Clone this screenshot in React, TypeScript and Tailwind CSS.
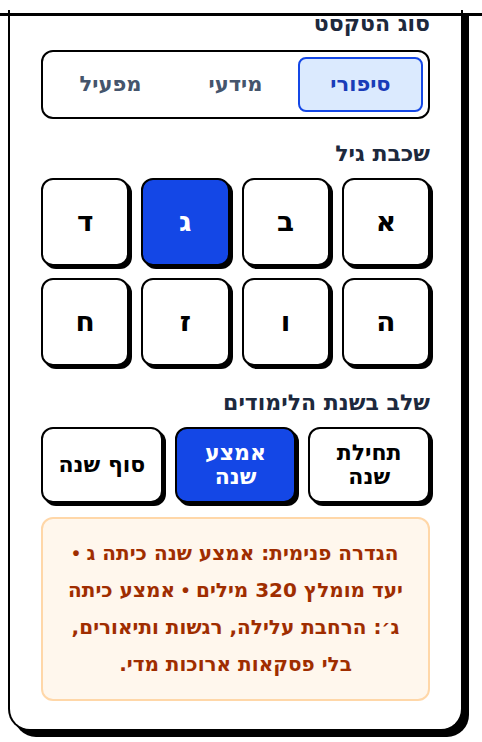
import { useState } from "react";

const textTypes = ["סיפורי", "מידעי", "מפעיל"];
const grades = ["א", "ב", "ג", "ד", "ה", "ו", "ז", "ח"];
const stages = [
  ["תחילת", "שנה"],
  ["אמצע", "שנה"],
  ["סוף שנה"],
];

function SectionTitle({ children }: { children: string }) {
  return <h2 className="text-[22px] font-bold leading-[28px] text-slate-800">{children}</h2>;
}

// small bullet, DejaVu's own one is too large
function Dot() {
  return <span className="font-['Liberation_Sans']">•</span>;
}

export default function App() {
  const [textType, setTextType] = useState(0);
  const [grade, setGrade] = useState(2);
  const [stage, setStage] = useState(1);

  return (
    <div className="w-[482px] h-[742px] overflow-hidden bg-white font-['DejaVu_Sans']">
      {/* edge of the sticky bar above; the card is scrolled under it */}
      <div className="h-[13px]" />
      <div className="relative z-10 h-[3px] bg-black" />

      <div
        dir="rtl"
        className="ml-2 w-[455px] rounded-b-[22px] border-2 border-t-0 border-black bg-white px-[31px] pb-[28px] shadow-[6px_6px_0_0_#000]"
      >
        <div className="-mt-[6px]">
          <SectionTitle>סוג הטקסט</SectionTitle>
          <div className="mt-3 grid grid-cols-3 rounded-xl border-2 border-black p-[5px]">
            {textTypes.map((t, i) => (
              <button
                key={t}
                type="button"
                onClick={() => setTextType(i)}
                className={`h-[55px] rounded-lg border-2 text-[21px] font-bold ${
                  textType === i
                    ? "border-blue-700 bg-blue-100 text-blue-800"
                    : "border-transparent text-slate-600"
                }`}
              >
                {t}
              </button>
            ))}
          </div>
        </div>

        <div className="mt-[21px]">
          <SectionTitle>שכבת גיל</SectionTitle>
          <div className="mt-2.5 grid grid-cols-4 gap-3">
            {grades.map((g, i) => (
              <button
                key={g}
                type="button"
                onClick={() => setGrade(i)}
                className={`h-[88px] rounded-xl border-2 border-black text-[28px] font-black shadow-[3px_3px_0_0_#000] ${
                  grade === i ? "bg-blue-700 text-white" : "bg-white text-black"
                }`}
              >
                {g}
              </button>
            ))}
          </div>
        </div>

        <div className="mt-[23px]">
          <SectionTitle>שלב בשנת הלימודים</SectionTitle>
          <div className="mt-2.5 grid grid-cols-3 gap-3">
            {stages.map((s, i) => (
              <button
                key={i}
                type="button"
                onClick={() => setStage(i)}
                className={`flex h-[76px] flex-col items-center justify-center rounded-xl border-2 border-black text-[22px] font-black leading-6 shadow-[3px_3px_0_0_#000] ${
                  stage === i ? "bg-blue-700 text-white" : "bg-white text-black"
                }`}
              >
                {s.map((line) => (
                  <span key={line}>{line}</span>
                ))}
              </button>
            ))}
          </div>
        </div>

        <div className="mt-3.5 rounded-xl border-2 border-orange-200 bg-orange-50 px-5 py-4 text-center text-xl font-bold leading-[37px] text-orange-800">
          הגדרה פנימית: אמצע שנה כיתה ג <Dot /> יעד מומלץ 320 מילים <Dot /> אמצע כיתה ג׳: הרחבת עלילה, רגשות ותיאורים, בלי פסקאות ארוכות מדי.
        </div>
      </div>
    </div>
  );
}
